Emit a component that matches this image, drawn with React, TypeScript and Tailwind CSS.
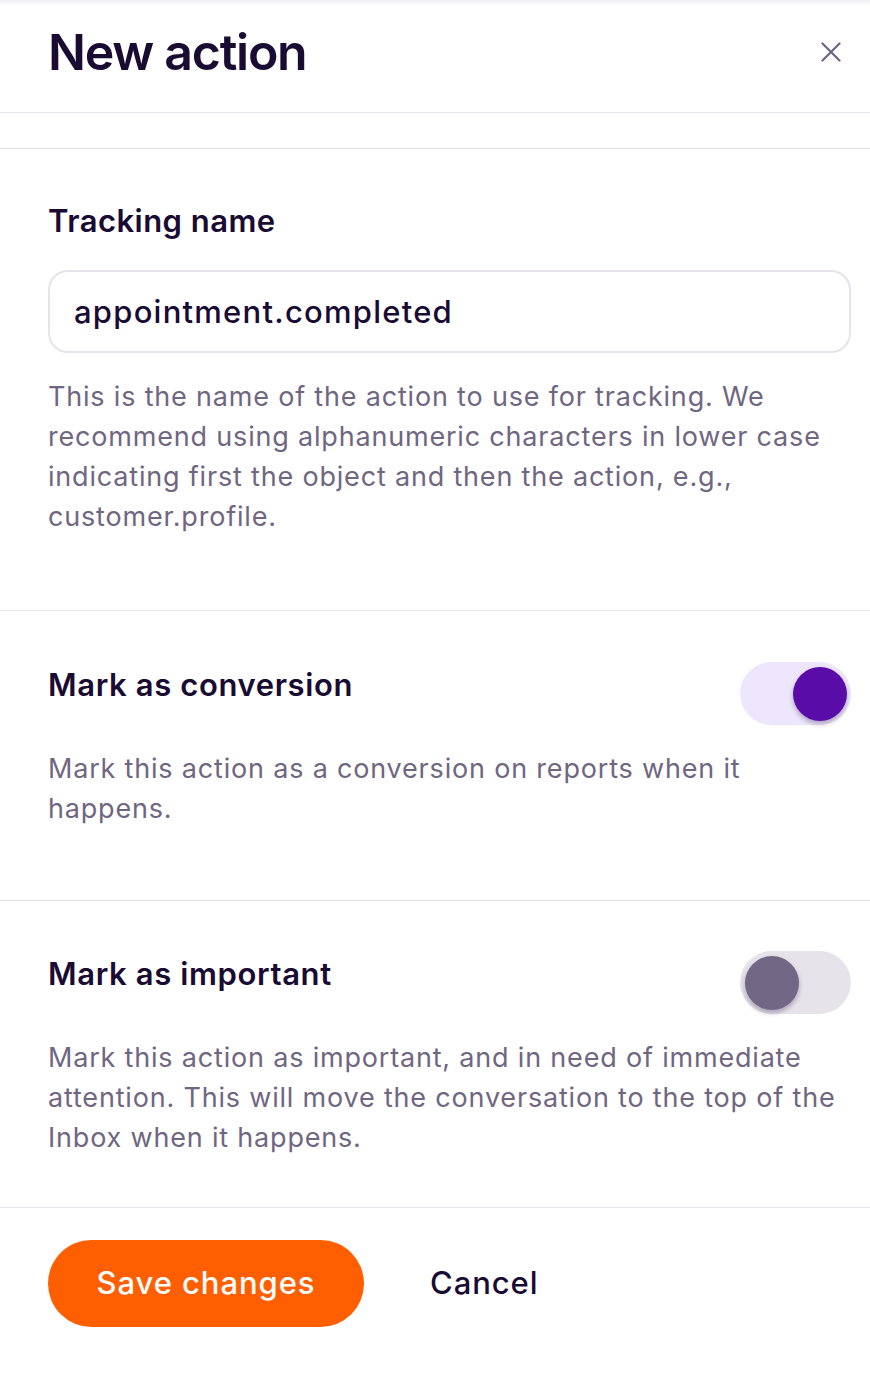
import * as React from "react"

interface ToggleProps {
  checked: boolean
  onChange: (v: boolean) => void
}

function Toggle({ checked, onChange }: ToggleProps) {
  return (
    <button
      type="button"
      role="switch"
      aria-checked={checked}
      onClick={() => onChange(!checked)}
      className={
        checked
          ? "relative flex h-[63px] w-[111px] shrink-0 items-center justify-end rounded-full bg-[#ede6fd] px-[4px]"
          : "relative flex h-[63px] w-[111px] shrink-0 items-center justify-start rounded-full bg-[#e6e3ea] px-[5px]"
      }
    >
      <span
        className={
          checked
            ? "block h-[54px] w-[54px] rounded-full bg-[#5a0ca9] shadow-[0_3px_5px_rgba(30,10,60,0.3)]"
            : "block h-[54px] w-[54px] rounded-full bg-[#726785] shadow-[0_3px_5px_rgba(30,10,60,0.3)]"
        }
      />
    </button>
  )
}

export default function App() {
  const [trackingName, setTrackingName] = React.useState("appointment.completed")
  const [conversion, setConversion] = React.useState(true)
  const [important, setImportant] = React.useState(false)

  return (
    <div className="min-h-[1376px] w-full bg-white text-[#1a0b33] font-['Inter','Noto_Sans',sans-serif]">
      {/* header */}
      <div className="relative h-[113px] border-b-[1.5px] border-[#e6e4ea]">
        <div className="absolute inset-x-0 top-0 h-[5px] bg-gradient-to-b from-[#efeef1] to-white" />
        <div className="flex items-start justify-between pl-[48px] pr-[29px] pt-[27px]">
          <h1 className="text-[50px] font-semibold leading-[50px] tracking-[-0.025em]">New action</h1>
          <button type="button" aria-label="Close" className="mt-[15px] text-[#6f6480]">
            <svg width="20" height="20" viewBox="0 0 20 20" fill="none" stroke="currentColor" strokeWidth="2.2" strokeLinecap="round">
              <path d="M1.5 1.5 L18.5 18.5 M18.5 1.5 L1.5 18.5" />
            </svg>
          </button>
        </div>
      </div>
      <div className="h-[36px] border-b-[1.5px] border-[#e6e4ea]" />

      {/* tracking name */}
      <section className="border-b-[1.5px] border-[#e6e4ea] px-[48px] pb-[73px] pt-[54px]">
        <label htmlFor="tracking" className="block text-[31px] font-semibold leading-[36px] tracking-[0.015em]">
          Tracking name
        </label>
        <input
          id="tracking"
          value={trackingName}
          onChange={(e) => setTrackingName(e.target.value)}
          className="mt-[31px] h-[83px] w-[803px] rounded-[20px] border-2 border-[#e6e4ea] px-[24px] text-[31px] font-medium tracking-[0.04em] text-[#1a0b33] outline-none"
        />
        <p className="mt-[24px] text-[27px] leading-[40px] tracking-[0.03em] text-[#716681]">
          This is the name of the action to use for tracking. We recommend using alphanumeric characters in lower case
          indicating first the object and then the action, e.g., customer.profile.
        </p>
      </section>

      {/* conversion */}
      <section className="border-b-[1.5px] border-[#e6e4ea] pb-[71px] pl-[48px] pr-[19px] pt-[51px]">
        <div className="flex items-start justify-between">
          <h2 className="mt-[5px] text-[31px] font-semibold leading-[36px] tracking-[0.02em]">Mark as conversion</h2>
          <Toggle checked={conversion} onChange={setConversion} />
        </div>
        <p className="mt-[24px] max-w-[760px] text-[27px] leading-[40px] tracking-[0.03em] text-[#716681]">
          Mark this action as a conversion on reports when it happens.
        </p>
      </section>

      {/* important */}
      <section className="border-b-[1.5px] border-[#e6e4ea] pb-[49px] pl-[48px] pr-[19px] pt-[50px]">
        <div className="flex items-start justify-between">
          <h2 className="mt-[5px] text-[31px] font-semibold leading-[36px] tracking-[0.02em]">Mark as important</h2>
          <Toggle checked={important} onChange={setImportant} />
        </div>
        <p className="mt-[24px] text-[27px] leading-[40px] tracking-[0.03em] text-[#716681]">
          Mark this action as important, and in need of immediate attention. This will move the conversation to the top
          of the Inbox when it happens.
        </p>
      </section>

      {/* footer */}
      <div className="flex items-center px-[48px] pt-[32px]">
        <button
          type="button"
          className="h-[87px] w-[316px] rounded-full bg-[#ff5f00] text-[31px] font-medium tracking-[0.03em] text-white"
        >
          Save changes
        </button>
        <button type="button" className="ml-[66px] text-[31px] font-medium tracking-[0.03em] text-[#1a0b33]">
          Cancel
        </button>
      </div>
    </div>
  )
}
